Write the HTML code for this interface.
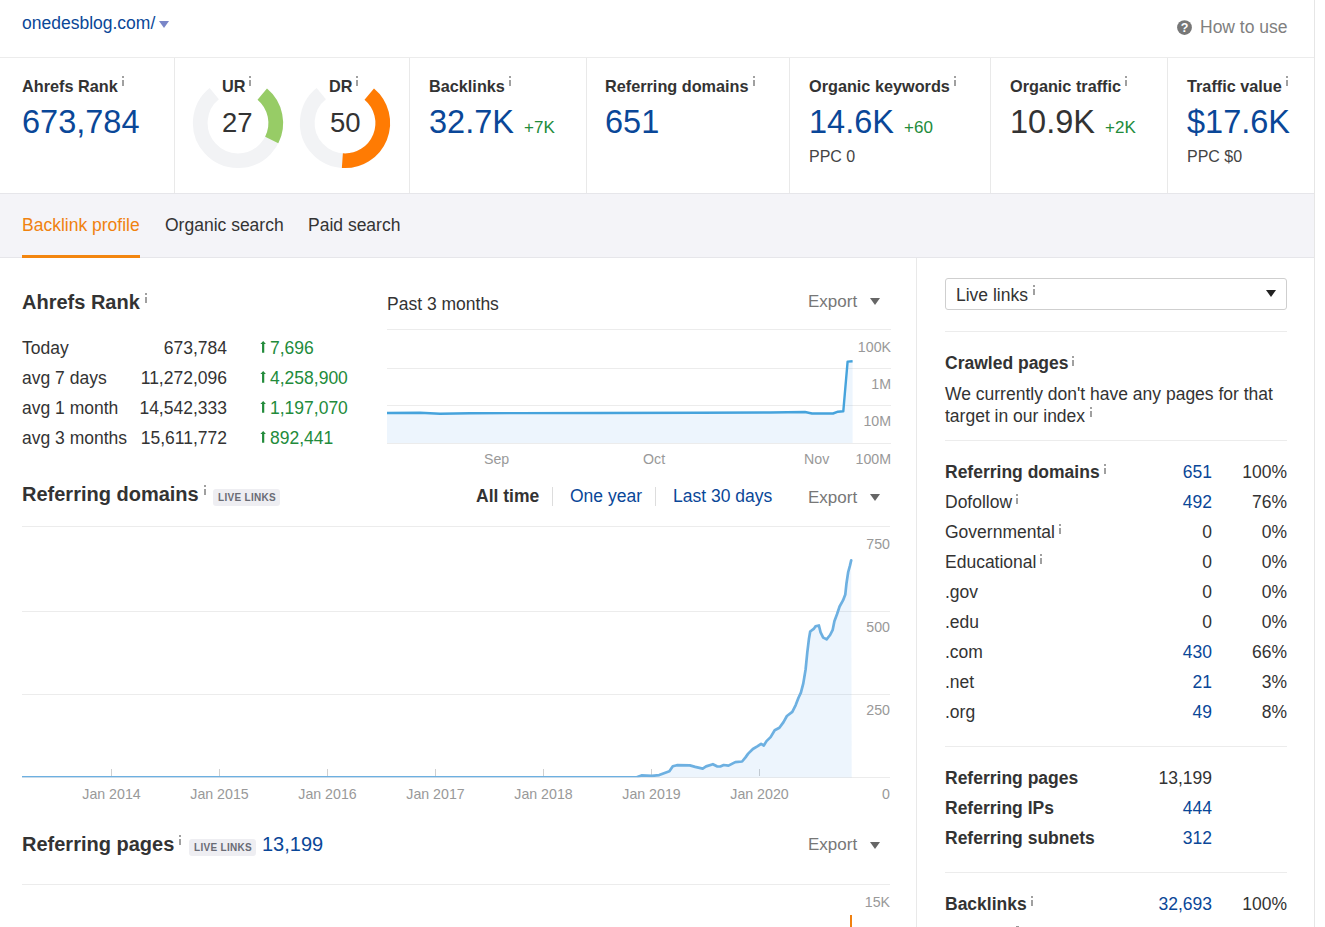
<!DOCTYPE html>
<html><head>
<meta charset="utf-8">
<title>Overview</title>
<style>
*{box-sizing:border-box;margin:0;padding:0}
html,body{width:1325px;height:927px;overflow:hidden;background:#fff}
body{font-family:"Liberation Sans",sans-serif;color:#333;position:relative;font-size:17.5px}
.a{position:absolute;white-space:nowrap;line-height:1}
.b{font-weight:bold}
.blue{color:#0a4798}
.green{color:#228b3b}
.grey{color:#777}
.ax{color:#999;font-size:14.2px}
.hl{position:absolute;height:1px;background:#ececec}
.vl{position:absolute;width:1px;background:#e9e9e9}
i.i{display:inline-block;position:relative;width:7px;height:0;vertical-align:baseline}
i.i::after{content:"";position:absolute;left:5px;bottom:6px;width:2px;height:10px;background:linear-gradient(#a0a0a0 0,#a0a0a0 2px,transparent 2px,transparent 4px,#a0a0a0 4px)}
.lbl i.i::after{left:4px}
.rp i.i::after{left:4px;bottom:4px}
.rp2 i.i::after{left:3px;bottom:3px}
.rp3 i.i::after{left:5px;bottom:5px}
.lbl{font-size:16.25px;font-weight:bold;color:#333}
.big{font-size:32.5px}
.tag{position:absolute;background:#eeeef2;color:#696b75;font-size:10px;font-weight:bold;letter-spacing:.3px;border-radius:3px;height:17px;line-height:17px;padding:0 0 0 5px;width:67px;white-space:nowrap;overflow:hidden}
.exp{color:#777;font-size:17px}
.tri{position:absolute;width:0;height:0;border-left:5px solid transparent;border-right:5px solid transparent;border-top:7px solid #666}
</style>
</head>
<body>
<!-- page right border -->
<div class="vl" style="left:1314px;top:0;height:927px;background:#e6e6e6"></div>

<!-- header -->
<div class="a blue" style="left:22px;top:15px;font-size:17.5px">onedesblog.com/</div>
<div class="tri" style="left:159px;top:21px;border-left-width:5px;border-right-width:5px;border-top:7px solid #7a86c8"></div>
<svg class="a" style="left:1177px;top:20px" width="15" height="15" viewBox="0 0 15 15"><circle cx="7.5" cy="7.6" r="7.4" fill="#777"></circle><text x="7.5" y="12" font-size="12.5" font-weight="bold" fill="#fff" text-anchor="middle" font-family="Liberation Sans, sans-serif">?</text></svg>
<div class="a grey" style="left:1200px;top:19px;font-size:17.5px;color:#808080">How to use</div>
<div class="hl" style="left:0;top:57px;width:1314px"></div>

<!-- stats row -->
<div class="vl" style="left:174px;top:58px;height:135px"></div>
<div class="vl" style="left:409px;top:58px;height:135px"></div>
<div class="vl" style="left:586px;top:58px;height:135px"></div>
<div class="vl" style="left:789px;top:58px;height:135px"></div>
<div class="vl" style="left:990px;top:58px;height:135px"></div>
<div class="vl" style="left:1167px;top:58px;height:135px"></div>

<div class="a lbl" style="left:22px;top:78px">Ahrefs Rank<i class="i"></i></div>
<div class="a big blue" style="left:22px;top:106px">673,784</div>

<!-- gauges -->
<svg class="a" style="left:188px;top:73px" width="100" height="100" viewBox="0 0 100 100" id="g1"><path d="M74.27 21.08 A37.75 37.75 0 1 1 26.24 20.66" fill="none" stroke="#f2f3f5" stroke-width="14.7"></path><path d="M74.27 21.08 A37.75 37.75 0 0 1 83.72 66.96" fill="none" stroke="#97cc66" stroke-width="14.7"></path></svg>
<svg class="a" style="left:295px;top:73px" width="100" height="100" viewBox="0 0 100 100" id="g2"><path d="M74.27 21.08 A37.75 37.75 0 1 1 26.24 20.66" fill="none" stroke="#f2f3f5" stroke-width="14.7"></path><path d="M74.27 21.08 A37.75 37.75 0 0 1 47.37 87.66" fill="none" stroke="#ff7b03" stroke-width="14.7"></path></svg>
<div class="a lbl" style="left:222px;top:78px">UR<i class="i"></i></div>
<div class="a" style="left:222px;top:109px;font-size:27.5px;color:#333">27</div>
<div class="a lbl" style="left:329px;top:78px">DR<i class="i"></i></div>
<div class="a" style="left:330px;top:109px;font-size:27.5px;color:#333">50</div>

<div class="a lbl" style="left:429px;top:78px">Backlinks<i class="i"></i></div>
<div class="a big blue" style="left:429px;top:106px">32.7K</div>
<div class="a green" style="left:524px;top:119px;font-size:17px">+7K</div>

<div class="a lbl" style="left:605px;top:78px">Referring domains<i class="i"></i></div>
<div class="a big blue" style="left:605px;top:106px">651</div>

<div class="a lbl" style="left:809px;top:78px">Organic keywords<i class="i"></i></div>
<div class="a big blue" style="left:809px;top:106px">14.6K</div>
<div class="a green" style="left:904px;top:119px;font-size:17px">+60</div>
<div class="a" style="left:809px;top:149px;font-size:16px;color:#444">PPC 0</div>

<div class="a lbl" style="left:1010px;top:78px">Organic traffic<i class="i"></i></div>
<div class="a big" style="left:1010px;top:106px;color:#333">10.9K</div>
<div class="a green" style="left:1105px;top:119px;font-size:17px">+2K</div>

<div class="a lbl" style="left:1187px;top:78px">Traffic value<i class="i"></i></div>
<div class="a big blue" style="left:1187px;top:106px">$17.6K</div>
<div class="a" style="left:1187px;top:149px;font-size:16px;color:#444">PPC $0</div>

<!-- tabs bar -->
<div class="a" style="left:0;top:193px;width:1314px;height:65px;background:#f4f4f8;border-top:1px solid #e6e6ea;border-bottom:1px solid #e6e6ea"></div>
<div class="a" style="left:22px;top:217px;font-size:17.5px;color:#f0820f">Backlink profile</div>
<div class="a" style="left:22px;top:255px;width:118px;height:3px;background:#f3860f"></div>
<div class="a" style="left:165px;top:217px;font-size:17.5px;color:#333">Organic search</div>
<div class="a" style="left:308px;top:217px;font-size:17.5px;color:#333">Paid search</div>

<!-- main divider -->
<div class="vl" style="left:916px;top:258px;height:669px"></div>

<!--LEFT-->
<div class="a b" style="left:22px;top:292px;font-size:20px">Ahrefs Rank<i class="i"></i></div>
<div id="rk"><div class="a" style="left:22px;top:340px">Today</div><div class="a" style="right:1098px;top:340px">673,784</div><svg class="a" style="left:260px;top:341px" width="7" height="13" viewBox="0 0 7 13"><path d="M3.15 0 L5.9 3 H4.25 V11.8 H2.05 V3 H0.4 Z" fill="#228b3b"></path></svg><div class="a green" style="left:270px;top:340px">7,696</div><div class="a" style="left:22px;top:370px">avg 7 days</div><div class="a" style="right:1098px;top:370px">11,272,096</div><svg class="a" style="left:260px;top:371px" width="7" height="13" viewBox="0 0 7 13"><path d="M3.15 0 L5.9 3 H4.25 V11.8 H2.05 V3 H0.4 Z" fill="#228b3b"></path></svg><div class="a green" style="left:270px;top:370px">4,258,900</div><div class="a" style="left:22px;top:400px">avg 1 month</div><div class="a" style="right:1098px;top:400px">14,542,333</div><svg class="a" style="left:260px;top:401px" width="7" height="13" viewBox="0 0 7 13"><path d="M3.15 0 L5.9 3 H4.25 V11.8 H2.05 V3 H0.4 Z" fill="#228b3b"></path></svg><div class="a green" style="left:270px;top:400px">1,197,070</div><div class="a" style="left:22px;top:430px">avg 3 months</div><div class="a" style="right:1098px;top:430px">15,611,772</div><svg class="a" style="left:260px;top:431px" width="7" height="13" viewBox="0 0 7 13"><path d="M3.15 0 L5.9 3 H4.25 V11.8 H2.05 V3 H0.4 Z" fill="#228b3b"></path></svg><div class="a green" style="left:270px;top:430px">892,441</div></div>
<div class="a" style="left:387px;top:296px;font-size:17.5px">Past 3 months</div>
<div class="a exp" style="left:808px;top:293px">Export</div><div class="tri" style="left:870px;top:298px"></div>

<!-- chart 1 -->
<div class="hl" style="left:387px;top:329px;width:504px"></div>
<div class="hl" style="left:387px;top:368px;width:504px"></div>
<div class="hl" style="left:387px;top:405px;width:504px"></div>
<div class="hl" style="left:387px;top:443px;width:504px"></div>
<svg class="a" style="left:387px;top:320px" width="504" height="130" viewBox="387 320 504 130">
<path d="M387 413 L420 412.8 L440 413.7 L470 413.3 L520 413.1 L600 413 L700 412.7 L770 412.5 L805 412 L812 413.5 L833 413.5 L838 411.7 L843.3 411.3 L847.6 361.6 L852.6 361.3 L852.6 443 L387 443 Z" fill="rgba(80,160,235,0.1)" stroke="none"></path>
<path d="M387 413 L420 412.8 L440 413.7 L470 413.3 L520 413.1 L600 413 L700 412.7 L770 412.5 L805 412 L812 413.5 L833 413.5 L838 411.7 L843.3 411.3 L847.6 361.6 L852.6 361.3" fill="none" stroke="#46a3dc" stroke-width="2.4" stroke-linejoin="round"></path>
</svg>
<div class="a ax" style="right:434px;top:340.4px">100K</div>
<div class="a ax" style="right:434px;top:377.4px">1M</div>
<div class="a ax" style="right:434px;top:414.4px">10M</div>
<div class="a ax" style="right:434px;top:452.4px">100M</div>
<div class="a ax" style="left:484px;top:452.4px">Sep</div>
<div class="a ax" style="left:643px;top:452.4px">Oct</div>
<div class="a ax" style="left:804px;top:452.4px">Nov</div>

<!-- referring domains header -->
<div class="a b" style="left:22px;top:484px;font-size:20px">Referring domains<i class="i"></i></div>
<div class="tag" style="left:213px;top:489px">LIVE LINKS</div>
<div class="a b" style="left:476px;top:488px;font-size:17.5px;color:#333">All time</div>
<div class="vl" style="left:552px;top:487px;height:19px;background:#ddd"></div>
<div class="a blue" style="left:570px;top:488px;font-size:17.5px">One year</div>
<div class="vl" style="left:655px;top:487px;height:19px;background:#ddd"></div>
<div class="a blue" style="left:673px;top:488px;font-size:17.5px">Last 30 days</div>
<div class="a exp" style="left:808px;top:489px">Export</div><div class="tri" style="left:870px;top:494px"></div>

<!-- chart 2 -->
<div class="hl" style="left:22px;top:526px;width:868px"></div>
<div class="hl" style="left:22px;top:611px;width:868px"></div>
<div class="hl" style="left:22px;top:694px;width:868px"></div>
<div class="hl" style="left:22px;top:777px;width:868px"></div>
<svg class="a" style="left:22px;top:520px" width="868" height="262" viewBox="22 520 868 262">
<g stroke="#d0d0d0" stroke-width="1"><path d="M111.5 769V776M219.5 769V776M327.5 769V776M435.5 769V776M543.5 769V776M651.5 769V776M759.5 769V776"></path></g>
<path id="c2f" fill="rgba(80,160,235,0.1)" stroke="none" d="M22 777.35 L636.8 777.35 L641.5 775.4 L651.7 775.8 L659.2 775.1 L663.3 773.5 L669.4 771.3 L672.8 766.3 L676.9 765.2 L689.8 765.4 L695.2 766.9 L702.7 768.6 L706.1 766.4 L712.9 764.2 L716.9 766.3 L720.3 766.5 L723.7 765 L728.5 765.6 L735.3 762.1 L742.1 761.5 L745.5 757.4 L748.2 753.6 L752.9 749 L757.7 746.2 L761.1 743.8 L763.8 745.5 L766.5 741.1 L770.6 737.1 L774.7 730.3 L779.4 727.8 L783.5 722.1 L786.9 716 L792.3 711.9 L795.7 705.1 L798.5 697.7 L800.9 692.6 L803.3 683.4 L805.6 669.5 L807.3 652.3 L809 638.4 L810.2 631.5 L813.7 628.9 L815.4 626.4 L818.9 625.5 L820.6 632.4 L823.2 637.6 L826.6 639.3 L830.1 635 L832.7 629.8 L834.4 621.2 L837 614.3 L839.6 606.5 L843 600.4 L845.3 594.4 L846.5 583.2 L848.2 572 L849.9 565.9 L851.2 560.4 L851.7 777.5 L22 777.5 Z"></path>
<clipPath id="cp2"><rect x="0" y="500" width="900" height="277.3"></rect></clipPath>
<path id="c2l" clip-path="url(#cp2)" fill="none" stroke="#6db0e1" stroke-width="2.7" stroke-linejoin="round" stroke-linecap="round" d="M22 777.35 L636.8 777.35 L641.5 775.4 L651.7 775.8 L659.2 775.1 L663.3 773.5 L669.4 771.3 L672.8 766.3 L676.9 765.2 L689.8 765.4 L695.2 766.9 L702.7 768.6 L706.1 766.4 L712.9 764.2 L716.9 766.3 L720.3 766.5 L723.7 765 L728.5 765.6 L735.3 762.1 L742.1 761.5 L745.5 757.4 L748.2 753.6 L752.9 749 L757.7 746.2 L761.1 743.8 L763.8 745.5 L766.5 741.1 L770.6 737.1 L774.7 730.3 L779.4 727.8 L783.5 722.1 L786.9 716 L792.3 711.9 L795.7 705.1 L798.5 697.7 L800.9 692.6 L803.3 683.4 L805.6 669.5 L807.3 652.3 L809 638.4 L810.2 631.5 L813.7 628.9 L815.4 626.4 L818.9 625.5 L820.6 632.4 L823.2 637.6 L826.6 639.3 L830.1 635 L832.7 629.8 L834.4 621.2 L837 614.3 L839.6 606.5 L843 600.4 L845.3 594.4 L846.5 583.2 L848.2 572 L849.9 565.9 L851.2 560.4"></path>
</svg>
<div class="a ax" style="right:435px;top:537.4px">750</div>
<div class="a ax" style="right:435px;top:620.4px">500</div>
<div class="a ax" style="right:435px;top:703.4px">250</div>
<div class="a ax" style="right:435px;top:787.4px">0</div>
<div id="xl"><div class="a ax" style="left:71.5px;width:80px;text-align:center;top:787.4px">Jan 2014</div><div class="a ax" style="left:179.5px;width:80px;text-align:center;top:787.4px">Jan 2015</div><div class="a ax" style="left:287.5px;width:80px;text-align:center;top:787.4px">Jan 2016</div><div class="a ax" style="left:395.5px;width:80px;text-align:center;top:787.4px">Jan 2017</div><div class="a ax" style="left:503.5px;width:80px;text-align:center;top:787.4px">Jan 2018</div><div class="a ax" style="left:611.5px;width:80px;text-align:center;top:787.4px">Jan 2019</div><div class="a ax" style="left:719.5px;width:80px;text-align:center;top:787.4px">Jan 2020</div></div>

<!-- referring pages -->
<div class="a b" style="left:22px;top:834px;font-size:20px">Referring pages<i class="i"></i></div>
<div class="tag" style="left:189px;top:839px">LIVE LINKS</div>
<div class="a blue" style="left:262px;top:834px;font-size:20px">13,199</div>
<div class="a exp" style="left:808px;top:836px">Export</div><div class="tri" style="left:870px;top:842px"></div>
<div class="hl" style="left:22px;top:884px;width:868px"></div>
<div class="a ax" style="right:435px;top:895px">15K</div>
<div class="a" style="left:850px;top:915px;width:2px;height:12px;background:#f0800f"></div>

<!--RIGHT-->
<div class="a" style="left:945px;top:278px;width:342px;height:32px;border:1px solid #cfcfcf;border-radius:3px;background:#fff"></div>
<div class="a" style="left:956px;top:287px;font-size:17.5px">Live links<i class="i"></i></div>
<div class="tri" style="left:1266px;top:290px;border-top-color:#222"></div>
<div class="hl" style="left:945px;top:331px;width:342px"></div>
<div class="a b rp2" style="left:945px;top:355px;font-size:17.5px">Crawled pages<i class="i"></i></div>
<div class="a" style="left:945px;top:386px;font-size:17.5px">We currently don't have any pages for that</div>
<div class="a rp3" style="left:945px;top:408px;font-size:17.5px">target in our index<i class="i"></i></div>
<div class="hl" style="left:945px;top:440px;width:342px"></div>
<div id="rt"><div class="a rp b" style="left:945px;top:464px">Referring domains<i class="i"></i></div><div class="a blue" style="right:113px;top:464px">651</div><div class="a" style="right:38px;top:464px">100%</div><div class="a rp" style="left:945px;top:494px">Dofollow<i class="i"></i></div><div class="a blue" style="right:113px;top:494px">492</div><div class="a" style="right:38px;top:494px">76%</div><div class="a rp" style="left:945px;top:524px">Governmental<i class="i"></i></div><div class="a" style="right:113px;top:524px">0</div><div class="a" style="right:38px;top:524px">0%</div><div class="a rp" style="left:945px;top:554px">Educational<i class="i"></i></div><div class="a" style="right:113px;top:554px">0</div><div class="a" style="right:38px;top:554px">0%</div><div class="a rp" style="left:945px;top:584px">.gov</div><div class="a" style="right:113px;top:584px">0</div><div class="a" style="right:38px;top:584px">0%</div><div class="a rp" style="left:945px;top:614px">.edu</div><div class="a" style="right:113px;top:614px">0</div><div class="a" style="right:38px;top:614px">0%</div><div class="a rp" style="left:945px;top:644px">.com</div><div class="a blue" style="right:113px;top:644px">430</div><div class="a" style="right:38px;top:644px">66%</div><div class="a rp" style="left:945px;top:674px">.net</div><div class="a blue" style="right:113px;top:674px">21</div><div class="a" style="right:38px;top:674px">3%</div><div class="a rp" style="left:945px;top:704px">.org</div><div class="a blue" style="right:113px;top:704px">49</div><div class="a" style="right:38px;top:704px">8%</div><div class="a rp b" style="left:945px;top:770px">Referring pages</div><div class="a" style="right:113px;top:770px">13,199</div><div class="a rp b" style="left:945px;top:800px">Referring IPs</div><div class="a blue" style="right:113px;top:800px">444</div><div class="a rp b" style="left:945px;top:830px">Referring subnets</div><div class="a blue" style="right:113px;top:830px">312</div><div class="a rp b" style="left:945px;top:896px">Backlinks<i class="i"></i></div><div class="a blue" style="right:113px;top:896px">32,693</div><div class="a" style="right:38px;top:896px">100%</div></div>
<div class="hl" style="left:945px;top:746px;width:342px"></div>
<div class="hl" style="left:945px;top:872px;width:342px"></div>
<div class="a" style="left:1016px;top:926px;width:3px;height:1px;background:#999"></div>





</body></html>
